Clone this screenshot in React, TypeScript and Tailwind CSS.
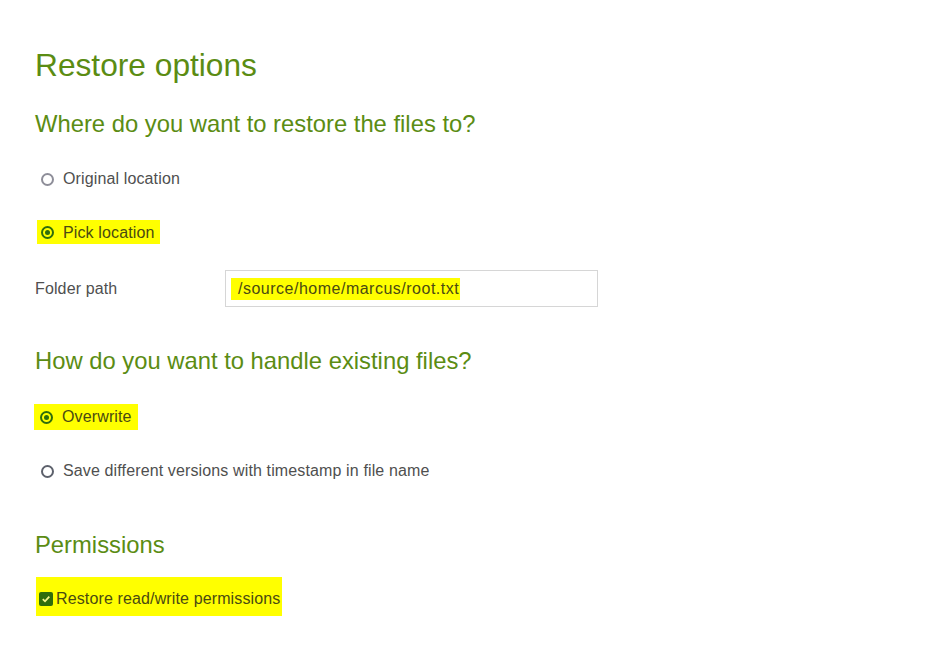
import React from "react";

const font = { fontFamily: '"Liberation Sans", Arial, sans-serif' };

function Radio({ checked, ring }: { checked?: boolean; ring?: string }) {
  if (checked) {
    return (
      <span className="flex h-[13px] w-[13px] shrink-0 items-center justify-center rounded-full border-2 border-[#2f6d0c]">
        <span className="h-[5px] w-[5px] rounded-full bg-[#2f6d0c]" />
      </span>
    );
  }
  return <span className={`h-[13px] w-[13px] shrink-0 rounded-full border-2 ${ring}`} />;
}

export default function App() {
  return (
    <div className="min-h-[646px] w-[938px] bg-white pl-[35px] pt-[48px]" style={font}>
      <h1 className="flex h-[36px] items-center text-[31.7px] font-normal leading-none text-[#5b8c13]">
        Restore options
      </h1>
      <h2 className="mt-[25px] flex h-[30px] items-center text-[23.8px] leading-none text-[#5b8c13]">
        Where do you want to restore the files to?
      </h2>

      <div className="mt-[28px] flex h-[24px] items-center pl-[6px] text-[16px] tracking-[0.13px] text-[#4f4f4f]">
        <Radio ring="border-[#8e8e99]" />
        <span className="ml-[9px]">Original location</span>
      </div>

      <div className="mt-[29px] flex">
        <div className="ml-[2px] flex h-[24px] items-center bg-[#ffff00] pl-[4px] pr-[5px] pt-[1px] text-[16px] tracking-[0.13px] text-[#4a4a12]">
          <Radio checked />
          <span className="ml-[9px]">Pick location</span>
        </div>
      </div>

      <div className="mt-[26px] flex h-[37px] items-center">
        <span className="w-[190px] text-[16px] tracking-[0.13px] text-[#4f4f4f]">Folder path</span>
        <div className="flex h-[37px] w-[373px] items-center border border-[#d6d6d6] pl-[5px]">
          <span className="flex h-[22px] items-center bg-[#ffff00] pl-[7px] pr-[1px] text-[16px] tracking-[0.5px] text-[#4a4a12]">
            /source/home/marcus/root.txt
          </span>
        </div>
      </div>

      <h2 className="mt-[39px] flex h-[30px] items-center text-[23.8px] leading-none text-[#5b8c13]">
        How do you want to handle existing files?
      </h2>

      <div className="mt-[28px] flex">
        <div className="-ml-[1px] flex h-[26px] items-center bg-[#ffff00] pl-[6px] pr-[6px] text-[16px] tracking-[0.13px] text-[#4a4a12]">
          <Radio checked />
          <span className="ml-[9px]">Overwrite</span>
        </div>
      </div>

      <div className="mt-[29px] flex h-[24px] items-center pl-[6px] text-[16px] tracking-[0.13px] text-[#4f4f4f]">
        <Radio ring="border-[#5d616c]" />
        <span className="ml-[9px]">Save different versions with timestamp in file name</span>
      </div>

      <h2 className="mt-[47px] flex h-[30px] items-center text-[23.8px] leading-none text-[#5b8c13]">
        Permissions
      </h2>

      <div className="mt-[17px] flex">
        <div className="ml-[1px] flex h-[39px] items-center bg-[#ffff00] pl-[3px] pr-[2px] pt-[4px] text-[16px] tracking-[0.13px] text-[#4a4a12]">
          <span className="flex h-[14px] w-[14px] items-center justify-center rounded-[2px] bg-[#2f6d0c]">
            <svg width="10" height="10" viewBox="0 0 10 10">
              <path d="M1.8 5.2 L4 7.3 L8.3 2.6" fill="none" stroke="#f4f48a" strokeWidth="1.8" />
            </svg>
          </span>
          <span className="ml-[3px]">Restore read/write permissions</span>
        </div>
      </div>
    </div>
  );
}
